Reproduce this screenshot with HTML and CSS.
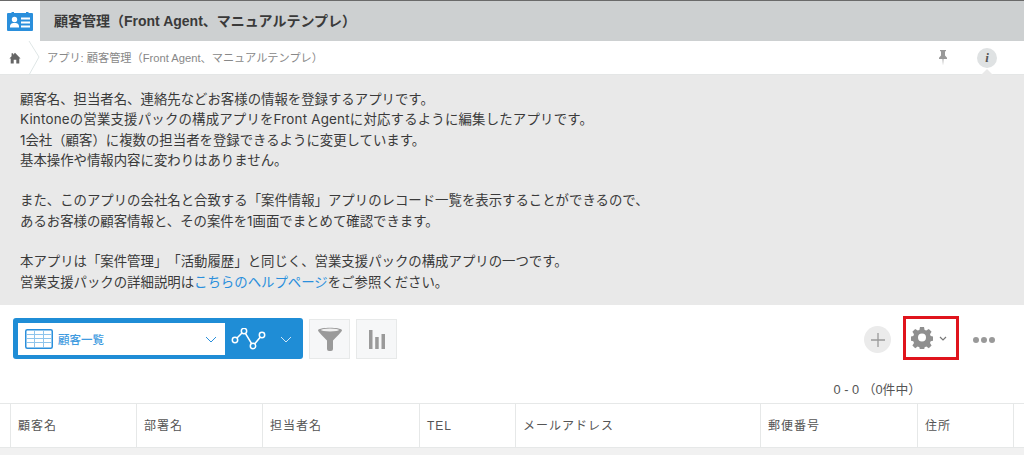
FILE: index.html
```html
<!DOCTYPE html>
<html lang="ja">
<head>
<meta charset="utf-8">
<title>顧客管理</title>
<link rel="stylesheet" href="styles.css">
</head>
<body>
<div class="topline"></div>
<header class="titlebar">
  <div class="appicon">
    <svg width="26" height="19" viewBox="0 0 26 19">
      <path fill="#2a8fdc" d="M1 1h3.500V0h2.500v1h12V0h2.500v1H25a1 1 0 0 1 1 1v16a1 1 0 0 1-1 1H1a1 1 0 0 1-1-1V2a1 1 0 0 1 1-1z"/>
      <circle cx="7.500" cy="7.500" r="2.700" fill="#fff"/>
      <path fill="#fff" d="M3 15.500v-2a3.500 3.500 0 0 1 3-2.500h3a3.500 3.500 0 0 1 3 2.500v2z"/>
      <path fill="#fff" d="M14 5.500h9v2h-9zM14 9.500h9v2h-9zM14 13.500h9v2h-9z"/>
    </svg>
  </div>
  <h1 class="apptitle">顧客管理（Front Agent、マニュアルテンプレ）</h1>
</header>
<nav class="crumbs">
  <div class="home">
    <svg width="12" height="12" viewBox="0 0 14 14"><path fill="#666" d="M7 1 13.500 7.500H12V13.500H8.500V9h-3v4.500H2V7.500H.5L3 5V1.500h1.800v1.700z"/></svg>
  </div>
  <svg class="chev" width="12" height="34" viewBox="0 0 12 34"><path fill="none" stroke="#dfe6e6" d="M1 0 11 16 1 34"/></svg>
  <span class="crumbtext">アプリ: 顧客管理（Front Agent、マニュアルテンプレ）</span>
  <div class="pin">
    <svg width="10" height="16" viewBox="0 0 10 16"><path fill="#999" d="M2 0h6v1.200H7v4.300L9 7.800V9H5.500L5 15.500 4.500 9H1V7.800l2-2.300V1.200H2z"/></svg>
  </div>
  <div class="info">i</div>
</nav>
<section class="desc">
  <p>顧客名、担当者名、連絡先などお客様の情報を登録するアプリです。<br>
  <span class="wideline">Kintoneの営業支援パックの構成アプリをFront Agentに対応するように編集したアプリです。</span><br>
  1会社（顧客）に複数の担当者を登録できるように変更しています。<br>
  基本操作や情報内容に変わりはありません。</p>
  <p>また、このアプリの会社名と合致する「案件情報」アプリのレコード一覧を表示することができるので、<br>
  あるお客様の顧客情報と、その案件を1画面でまとめて確認できます。</p>
  <p>本アプリは「案件管理」「活動履歴」と同じく、営業支援パックの構成アプリの一つです。<br>
  営業支援パックの詳細説明は<a class="link">こちらのヘルプページ</a>をご参照ください。</p>
</section>
<section class="toolbar">
  <div class="viewpicker">
    <div class="viewselect">
      <svg width="28" height="20" viewBox="0 0 28 20"><rect x=".75" y=".75" width="26.500" height="18.500" rx="1.500" fill="#fff" stroke="#2a8fdc" stroke-width="1.500"/><path fill="none" stroke="#8ec4ec" d="M1 5.500h26M1 9.500h26M1 13.500h26M9.500 1v18M18.500 1v18"/></svg>
      <span class="viewname">顧客一覧</span>
      <svg class="viewchev" width="12" height="7" viewBox="0 0 12 7"><path fill="none" stroke="#2a8fdc" d="M1 1l5 5 5-5"/></svg>
    </div>
    <div class="graphpart">
      <svg width="36" height="22" viewBox="0 0 36 22"><g fill="#1f8dd6" stroke="#fff" stroke-width="1.500"><path fill="none" d="M4 12 13 3 22 18 31 7"/><circle cx="4" cy="12" r="2.700"/><circle cx="13" cy="3" r="2.700"/><circle cx="22" cy="18" r="2.700"/><circle cx="31" cy="7" r="2.700"/></g></svg>
      <svg width="12" height="7" viewBox="0 0 12 7"><path fill="none" stroke="#cfe6f7" d="M1 1l5 5 5-5"/></svg>
    </div>
  </div>
  <button class="toolbtn">
    <svg width="24" height="24" viewBox="0 0 24 24"><path fill="#9a9a9a" d="M0 3C2 0 22 0 24 3c0 2-6 7-9 10.500V22a2 2 0 0 1-2 2h-2a2 2 0 0 1-2-2V13.500C6 10 0 5 0 3z"/><ellipse cx="12" cy="3" rx="9" ry="1.400" fill="#f0f0f0"/></svg>
  </button>
  <button class="toolbtn">
    <svg width="16" height="19" viewBox="0 0 16 19"><path fill="#9a9a9a" d="M0 0h3.500v19H0zM6.200 7h3.500v12H6.200zM12.500 4H16v15h-3.500z"/></svg>
  </button>
  <div class="spacer"></div>
  <div class="addbtn">
    <svg width="16" height="16" viewBox="0 0 16 16"><path fill="none" stroke="#9a9a9a" stroke-width="1.300" d="M8 1v14M1 8h14"/></svg>
  </div>
  <div class="gearbox">
    <svg width="22" height="22" viewBox="0 0 22 22"><path fill="#8f8f8f" fill-rule="evenodd" d="M9 .5h4l.6 2.900 1.700.7 2.500-1.600 2.800 2.800-1.600 2.500.7 1.700 2.900.6v4l-2.900.6-.7 1.700 1.600 2.500-2.800 2.800-2.500-1.600-1.700.7-.6 2.900H9l-.6-2.900-1.700-.7-2.500 1.600-2.800-2.800 1.600-2.500-.7-1.700-2.900-.6v-4l2.900-.6.7-1.700-1.600-2.500 2.800-2.800 2.500 1.600 1.700-.7zM11 7a4 4 0 1 0 0 8 4 4 0 0 0 0-8z" transform="translate(0 -.5)"/></svg>
    <svg width="8" height="5" viewBox="0 0 8 5"><path fill="none" stroke="#777" stroke-width="1.200" d="M1 1l3 3 3-3"/></svg>
  </div>
  <div class="dots"><i></i><i></i><i></i></div>
</section>
<div class="pager">0 - 0 （0件中）</div>
<div class="grid">
  <div class="cell"></div>
  <div class="cell">顧客名</div>
  <div class="cell">部署名</div>
  <div class="cell">担当者名</div>
  <div class="cell">TEL</div>
  <div class="cell">メールアドレス</div>
  <div class="cell">郵便番号</div>
  <div class="cell">住所</div>
  <div class="cell"></div>
</div>
<div class="rest"></div>
</body>
</html>
```
FILE: styles.css
```css
* { box-sizing: border-box; }
html, body { margin: 0; padding: 0; height: 455px; overflow: hidden; }
body {
  background: #fff;
  color: #444;
  font-family: "Liberation Sans", "Noto Sans CJK JP", sans-serif;
  text-spacing-trim: space-all;
}
.topline { height: 1px; background: #6a6a6a; }
.titlebar { display: flex; height: 40px; background: #cdd0d1; }
.appicon {
  width: 40px; background: #fff;
  display: flex; align-items: center; justify-content: center;
}
.apptitle {
  margin: 0 0 0 14px;
  font-size: 14px; line-height: 40px; font-weight: 700; color: #3a3a3a;
}
.crumbs {
  height: 34px; display: flex; align-items: center; position: relative;
  border-bottom: 1px solid #e4e6e6;
}
.home { width: 28px; padding-left: 9px; display: flex; }
.chev { flex: none; }
.crumbtext { margin: -2px 0 0 7px; font-size: 11.200px; color: #888; flex: 1; }
.pin { width: 10px; display: flex; margin-right: 29px; }
.info {
  width: 20px; height: 20px; border-radius: 50%; margin-right: 27px;
  background: #dfe2e3; color: #555; text-align: center;
  font: italic 700 13px/20px "Liberation Serif", serif;
  position: relative;
}
.info::after {
  content: ""; position: absolute; left: 4px; top: 21px;
  border: 6px solid transparent; border-top: 0; border-bottom-color: #e9e9e9;
}
.desc {
  height: 230px; background: #e9e9e9; padding: 14px 20px 0;
  font-family: Inter, "Noto Sans CJK JP", sans-serif;
  font-size: 13.400px; line-height: 20.300px; color: #3a3a3a;
}
.desc p { margin: 0 0 20.300px; }
.wideline { letter-spacing: .2px; }
.link { color: #2a8fdc; }
.toolbar {
  height: 54px; padding: 13px 0 0 13px;
  display: flex; align-items: flex-start;
}
.viewpicker {
  width: 290px; height: 41px; background: #1f8dd6; border-radius: 3px;
  padding: 5px 0 4px 5px; display: flex;
}
.viewselect {
  width: 207px; background: #fff; display: flex; align-items: center;
  padding: 0 8px 0 7px;
}
.viewname { margin-left: 5px; font-size: 11.500px; font-weight: 500; color: #3f9be0; flex: 1; }
.graphpart { flex: 1; display: flex; align-items: center; gap: 13px; padding-left: 6px; }
.toolbtn {
  width: 41px; height: 40px; margin: 1px 0 0 6px; padding: 0;
  background: #f6f7f8; border: 1px solid #e7e9e9;
  display: flex; align-items: center; justify-content: center;
}
.spacer { flex: 1; }
.addbtn {
  width: 27px; height: 27px; margin: 8px 12px 0 0; border-radius: 50%;
  background: #ebebeb; display: flex; align-items: center; justify-content: center;
}
.gearbox {
  width: 56px; height: 44px; margin-top: -2px; border: 3px solid #e0141c;
  display: flex; align-items: center; gap: 6px; padding-left: 5px;
}
.dots { display: flex; gap: 2px; margin: 19px 29px 0 14px; }
.dots i { width: 6px; height: 6px; border-radius: 50%; background: #999; }
.pager {
  height: 44px; padding: 22px 103px 0 0; text-align: right;
  font-size: 12.800px; line-height: 17px; color: #555;
}
.grid {
  display: grid; height: 45px;
  grid-template-columns: 11px 126px 126px 157px 96px 245px 157px 96px 1fr;
  border-top: 1px solid #e6e8e8; border-bottom: 1px solid #e6e8e8;
}
.cell {
  padding: 1px 0 0 7px; font-size: 12px; line-height: 43px; letter-spacing: 1px; color: #555;
  border-right: 1px solid #e6e8e8;
}
.cell:last-child { border-right: 0; }
.rest { height: 7px; background: #f1f1f1; }
```
